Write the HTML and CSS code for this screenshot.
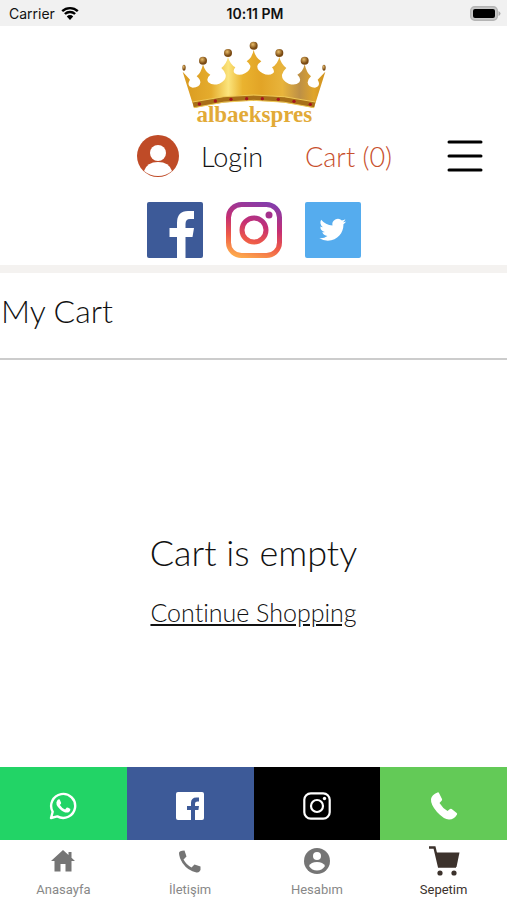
FILE: index.html
```html
<!DOCTYPE html>
<html lang="tr">
<head>
    <meta charset="UTF-8">
    <meta name="viewport" content="width=device-width, initial-scale=1.0">
    <title>My Cart</title>
    <link rel="stylesheet" href="styles.css">
</head>
<body>
    <div class="status-bar">
        <div class="carrier">
            <span>Carrier</span>
            <svg width="18" height="14" viewBox="0 0 18 14">
                <path d="M1.2 5.2a11.4 11.4 0 0 1 15.6 0M3.9 8a7.4 7.4 0 0 1 10.2 0" fill="none" stroke="#000" stroke-width="2.4"/>
                <path d="M9 14l-3.2-3.6a4.6 4.6 0 0 1 6.4 0z" fill="#000"/>
            </svg>
        </div>
        <div class="time">10:11 PM</div>
        <div class="battery">
            <svg width="31" height="15" viewBox="0 0 31 15">
                <rect x=".7" y=".7" width="26.600" height="13.600" rx="4" fill="#c8c8c8" stroke="#b4b4b4" stroke-width="1.400"/>
                <path d="M28.500 5q2 1 2 2.500t-2 2.500z" fill="#aaa"/>
                <rect x="3" y="3" width="22" height="9" rx="2" fill="#000"/>
            </svg>
        </div>
    </div>

    <header class="header">
        <a href="#" class="logo" aria-label="albaekspres">
            <svg width="144" height="88" viewBox="36 18 432 264">
                <defs>
                    <linearGradient id="gold">
                        <stop offset="0" stop-color="#d99a20"/>
                        <stop offset=".2" stop-color="#e5ac2d"/>
                        <stop offset=".32" stop-color="#fbe47c"/>
                        <stop offset=".42" stop-color="#eab32f"/>
                        <stop offset=".55" stop-color="#e2a426"/>
                        <stop offset=".7" stop-color="#e8b43c"/>
                        <stop offset=".82" stop-color="#bd9046"/>
                        <stop offset=".92" stop-color="#e0a52b"/>
                        <stop offset="1" stop-color="#d0901c"/>
                    </linearGradient>
                    <radialGradient id="ball" cx=".4" cy=".35">
                        <stop offset="0" stop-color="#e8bc69"/>
                        <stop offset="1" stop-color="#7a4a13"/>
                    </radialGradient>
                </defs>
                <path fill="url(#gold)" d="M38 110L60 134Q48 153 68 158Q89 157 91 143Q92 134 80 124Q93 115 99 88Q105 111 121 119Q107 130 115 142Q128 153 148 146Q170 136 167 119Q165 109 154 99Q170 86 174 66Q180 88 196 97Q187 108 194 115Q207 124 225 115Q243 105 241 92Q239 86 230 79Q247 67 251 44Q255 67 274 79Q264 86 262 93Q261 106 278 115Q296 124 309 115Q316 108 306 97Q323 88 328 66Q333 87 349 99Q338 109 336 119Q334 136 356 146Q376 153 388 142Q395 130 382 119Q399 111 404 88Q410 115 423 124Q412 134 413 143Q415 157 435 158Q454 153 443 134L466 110L432 218Q250 174 72 218Z"/>
                <path d="M68 202Q250 160 436 202L432 219Q250 175 72 219Z" fill="#a86f18"/>
                <path d="M68 201Q250 159 436 201M72 218Q250 174 432 218" fill="none" stroke="#f0ca59" stroke-width="3"/>
                <g fill="url(#ball)">
                    <circle cx="99" cy="77" r="12"/>
                    <circle cx="174" cy="54" r="12"/>
                    <circle cx="251" cy="32" r="12"/>
                    <circle cx="328" cy="54" r="12"/>
                    <circle cx="404" cy="77" r="12"/>
                    <ellipse cx="42" cy="98" rx="5" ry="9"/>
                    <ellipse cx="462" cy="98" rx="5" ry="9"/>
                </g>
                <g fill="#a51420">
                    <circle cx="88" cy="207" r="5"/>
                    <circle cx="136" cy="198" r="5"/>
                    <circle cx="183" cy="193" r="5"/>
                    <circle cx="230" cy="191" r="5"/>
                    <circle cx="277" cy="191" r="5"/>
                    <circle cx="325" cy="193" r="5"/>
                    <circle cx="372" cy="199" r="5"/>
                    <circle cx="421" cy="208" r="5"/>
                </g>
                <text class="logo-text" x="253" y="262" text-anchor="middle">albaekspres</text>
            </svg>
        </a>

        <div class="account-row">
            <a href="#" class="login">
                <svg width="42" height="42" viewBox="0 0 42 42">
                    <circle cx="21" cy="21" r="21" fill="#bf4b27"/>
                    <circle cx="21" cy="18" r="8" fill="#fff"/>
                    <path d="M7 36q3-9 14-9t14 9q-6 5-14 5t-14-5z" fill="#fff"/>
                </svg>
                <span>Login</span>
            </a>
            <a href="#" class="cart-link">Cart (0)</a>
            <button class="menu-btn" aria-label="Menu">
                <svg width="36" height="34" viewBox="0 0 36 34">
                    <path d="M2 3h32M2 17h32M2 31h32" stroke="#000" stroke-width="3" stroke-linecap="round"/>
                </svg>
            </button>
        </div>

        <div class="social">
            <a href="#" aria-label="Facebook">
                <svg width="56" height="56" viewBox="0 0 56 56">
                    <rect width="56" height="56" rx="2" fill="#3d5a98"/>
                    <path d="M30 56V35h-7.500v-9H30v-5q0-12 11-12h6v8h-4q-4.500 0-4.500 5v4H47l-1.500 9h-7V56z" fill="#fff"/>
                </svg>
            </a>
            <a href="#" aria-label="Instagram">
                <svg width="56" height="56" viewBox="0 0 56 56">
                    <defs>
                        <linearGradient id="insta" x1="36" y1="0" x2="20" y2="56" gradientUnits="userSpaceOnUse">
                            <stop offset="0" stop-color="#853caa"/>
                            <stop offset=".4" stop-color="#c52e74"/>
                            <stop offset=".7" stop-color="#ee5a48"/>
                            <stop offset="1" stop-color="#fda74c"/>
                        </linearGradient>
                    </defs>
                    <g fill="none" stroke="url(#insta)" stroke-width="5">
                        <rect x="2.500" y="2.500" width="51" height="51" rx="13"/>
                        <circle cx="28" cy="28" r="12"/>
                    </g>
                    <circle cx="43" cy="13" r="3.500" fill="#a5308c"/>
                </svg>
            </a>
            <a href="#" aria-label="Twitter">
                <svg width="56" height="56" viewBox="0 0 56 56">
                    <rect width="56" height="56" rx="2" fill="#55acee"/>
                    <path transform="translate(14.300 14.300) scale(1.120)" fill="#fff" d="M23.950 4.570a10 10 0 0 1-2.820.770 4.960 4.960 0 0 0 2.160-2.720c-.950.550-2 .950-3.130 1.180a4.920 4.920 0 0 0-8.380 4.480C7.690 8.090 4.070 6.130 1.640 3.160a4.920 4.920 0 0 0 1.520 6.570 4.900 4.900 0 0 1-2.230-.610v.060a4.920 4.920 0 0 0 3.950 4.830 5 5 0 0 1-2.210.080 4.940 4.940 0 0 0 4.600 3.420A9.870 9.870 0 0 1 0 19.540a14 14 0 0 0 7.550 2.210c9.050 0 14-7.500 14-13.980 0-.210 0-.420-.020-.630a9.940 9.940 0 0 0 2.420-2.570z"/>
                </svg>
            </a>
        </div>
    </header>

    <h1 class="page-title">My Cart</h1>

    <main class="cart">
        <h2>Cart is empty</h2>
        <a href="#">Continue Shopping</a>
    </main>

    <div class="contact-bar">
        <a href="#" class="whatsapp" aria-label="WhatsApp">
            <svg width="28" height="28" viewBox="0 0 28 28">
                <path d="M2 26l1.700-6.200A12 12 0 1 1 8.300 24.400z" fill="none" stroke="#fff" stroke-width="2.400" stroke-linejoin="round"/>
                <path d="M8.200 8.400q1.300-1.400 2.500-.900l1.500 3.500q.100.700-1.300 2.100 2 3.300 5.200 4.400l1.700-2q.500-.400 3.600 1.400.300 2.600-2.200 3.500-3.500 1.100-8.200-3.200-5.400-5.200-2.800-8.800z" fill="#fff"/>
            </svg>
        </a>
        <a href="#" class="facebook" aria-label="Facebook">
            <svg width="28" height="28" viewBox="0 0 28 28">
                <rect width="28" height="28" rx="2" fill="#fff"/>
                <path d="M15 28V18h-4v-4h4v-3q0-5.500 5.500-5.500H23v4h-1.500q-2.500 0-2.500 2.300V14h4l-.600 4H19v10z" fill="#3d5a98"/>
            </svg>
        </a>
        <a href="#" class="instagram" aria-label="Instagram">
            <svg width="28" height="28" viewBox="0 0 28 28">
                <g fill="none" stroke="#fff" stroke-width="2.200">
                    <rect x="1.300" y="1.300" width="25.400" height="25.400" rx="6.500"/>
                    <circle cx="14" cy="14" r="6"/>
                </g>
                <circle cx="21.500" cy="6.500" r="1.700" fill="#fff"/>
            </svg>
        </a>
        <a href="#" class="phone" aria-label="Phone">
            <svg width="28" height="28" viewBox="0 0 28 28">
                <path d="M7.500.500Q8.500 0 9 1l3 6q.400 1-.400 1.700L9.500 11q3 5 8 8l2.500-2q.900-.600 1.700 0l5 4q.900.800.200 1.700-3 5-8 4.800Q14 27.500 7 20 .500 12.500 1 7q.800-4.500 6.500-6.500z" fill="#fff"/>
            </svg>
        </a>
    </div>

    <nav class="tab-bar">
        <a href="#">
            <svg width="32" height="32" viewBox="0 0 32 32">
                <path d="M16 5L4 16h3.500v10.500h6V19h5v7.500h6V16H28l-3.500-3.200V7h-3v3z" fill="#757575"/>
            </svg>
            <span>Anasayfa</span>
        </a>
        <a href="#">
            <svg width="32" height="32" viewBox="0 0 32 32">
                <path d="M5 8q0-2.500 5.500-2.500l2 6-3 3q3 5.500 8 8l3-3 6 2v3.500q-1.500 3-4 2.500Q14 26 8.500 18 5 12 5 8z" fill="#757575"/>
            </svg>
            <span>İletişim</span>
        </a>
        <a href="#">
            <svg width="32" height="32" viewBox="0 0 32 32">
                <circle cx="16" cy="16" r="13" fill="#757575"/>
                <circle cx="16" cy="11" r="4" fill="#fff"/>
                <path d="M8 21q2-4 8-4t8 4q-3 4.500-8 4.500T8 21z" fill="#fff"/>
            </svg>
            <span>Hesabım</span>
        </a>
        <a href="#" class="active">
            <svg width="32" height="32" viewBox="0 0 32 32">
                <path d="M1 2.500h5.500l4.500 19h17" fill="none" stroke="#3c322c" stroke-width="2.400"/>
                <path d="M8 7.500h23.500L28.500 22H11z" fill="#3c322c"/>
                <circle cx="12" cy="28" r="2.600" fill="#3c322c"/>
                <circle cx="26" cy="28" r="2.600" fill="#3c322c"/>
            </svg>
            <span>Sepetim</span>
        </a>
    </nav>
</body>
</html>
```
FILE: styles.css
```css
* {
    box-sizing: border-box;
}
body {
    font-family: Lato, sans-serif;
    font-weight: 300;
    font-variant-ligatures: none;
    background-color: #fff;
    color: #111;
    margin: 0;
    min-height: 100vh;
    display: flex;
    flex-direction: column;
}
svg {
    display: block;
}
a {
    color: inherit;
    text-decoration: none;
}
.status-bar {
    display: grid;
    grid-template-columns: 1fr auto 1fr;
    align-items: center;
    height: 26px;
    padding: 0 6px 0 9px;
    background-color: #f1f1f1;
    font-family: Inter, sans-serif;
    font-size: 14px;
    font-weight: 400;
}
.carrier {
    display: flex;
    align-items: center;
    gap: 6px;
}
.time {
    font-weight: 600;
}
.battery {
    justify-self: end;
}
.header {
    border-bottom: 8px solid #f4f2f0;
    padding: 15px 24px 7px;
}
.logo {
    display: flex;
    justify-content: center;
}
.logo-text {
    font-family: "Liberation Serif", serif;
    font-size: 69px;
    font-weight: bold;
    fill: #e2aa37;
}
.account-row {
    display: flex;
    align-items: center;
    margin-top: 6px;
    padding-left: 113px;
    font-size: 27px;
}
.login {
    display: flex;
    align-items: center;
    gap: 22px;
}
.cart-link {
    margin-left: 42px;
    color: #c8502d;
}
.menu-btn {
    margin-left: auto;
    padding: 0;
    border: none;
    background: none;
    cursor: pointer;
}
.social {
    display: flex;
    justify-content: center;
    gap: 23px;
    margin-top: 25px;
}
.page-title {
    margin: 0;
    padding: 18px 1px 27px;
    border-bottom: 2px solid #ccc;
    font-size: 32px;
    line-height: 40px;
    font-weight: 300;
}
.cart {
    flex: 1;
    display: flex;
    flex-direction: column;
    align-items: center;
    justify-content: center;
    gap: 22px;
    padding-top: 30px;
}
.cart h2 {
    margin: 0;
    font-size: 36px;
    line-height: 44px;
    font-weight: 300;
}
.cart a {
    font-size: 25px;
    line-height: 32px;
    text-decoration: underline;
}
.contact-bar, .tab-bar {
    display: grid;
    grid-template-columns: repeat(4, 1fr);
}
.contact-bar a {
    display: flex;
    align-items: center;
    justify-content: center;
    height: 73px;
    padding-top: 4px;
}
.whatsapp {
    background-color: #22d466;
}
.facebook {
    background-color: #3d5a98;
}
.instagram {
    background-color: #000;
}
.phone {
    background-color: #63ca57;
}
.tab-bar a {
    display: flex;
    flex-direction: column;
    align-items: center;
    gap: 5px;
    height: 60px;
    padding-top: 5px;
    font-family: Roboto, sans-serif;
    font-size: 13px;
    line-height: 16px;
    font-weight: 400;
    color: #888;
}
.tab-bar .active {
    color: #3c322c;
}
```
